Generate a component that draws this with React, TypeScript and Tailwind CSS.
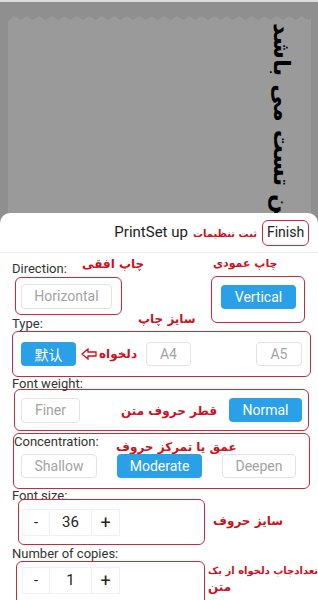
import React from "react";

const ui = "font-['Roboto','Liberation_Sans',sans-serif]";
const note = "font-['DejaVu_Sans',sans-serif] font-bold leading-[14px] text-[#d0101e] whitespace-nowrap";

function RedBox({ className, children }: { className: string; children?: React.ReactNode }) {
  return <div className={"border-[1.5px] border-[#c62a3b] rounded-[6px] " + className}>{children}</div>;
}

function Opt({ label, active, className }: { label: string; active?: boolean; className: string }) {
  return (
    <div
      className={
        "flex items-center justify-center rounded-[4px] text-[14px] " +
        (active ? "bg-[#29a0e8] text-white" : "border border-[#e3e3e3] text-[#a3a3a3] bg-white") +
        " " +
        className
      }
    >
      {label}
    </div>
  );
}

function Stepper({ value }: { value: string }) {
  return (
    <div className="flex h-[27px] text-[15px] text-[#222]">
      <div className="w-[28px] flex items-center justify-center border border-[#f1f1f1]">-</div>
      <div className="w-[41px] flex items-center justify-center border-y border-[#f1f1f1]">{value}</div>
      <div className="w-[29px] flex items-center justify-center border border-[#f1f1f1] text-[18px]">+</div>
    </div>
  );
}

function Note({
  children,
  className = "",
  size = "text-[12px]",
}: {
  children: React.ReactNode;
  className?: string;
  size?: string;
}) {
  return (
    <span dir="rtl" className={note + " " + size + " " + className}>
      {children}
    </span>
  );
}

export default function App() {
  // zigzag edge on top of the print preview paper
  const teeth = Array.from({ length: 25 }, (_, i) => i);
  const zig =
    "0,5 " + teeth.map((i) => `${i * 12.5 + 6.25},0 ${(i + 1) * 12.5},4`).join(" ") + " 303,5";

  return (
    <div className={"w-[318px] h-[600px] overflow-hidden bg-[#8f8f8f] " + ui}>
      {/* Print preview */}
      <div className="relative h-[213px] overflow-hidden border-t-2 border-[#dcdcdc]">
        <div className="pt-[14px] pl-[8px] pr-[7px] h-full">
          <svg width="303" height="5" viewBox="0 0 303 5" preserveAspectRatio="none" className="block">
            <polygon points={zig} fill="#9a9a9a" />
          </svg>
          <div className="bg-[#9a9a9a] h-full" />
        </div>
        <div
          dir="rtl"
          className="absolute left-[296px] top-[21px] origin-top-left rotate-90 whitespace-nowrap font-['DejaVu_Sans',sans-serif] font-bold text-[23px] leading-[28px] text-black"
        >
          متن تست می باشد
        </div>
      </div>

      {/* Settings sheet */}
      <div className="bg-white rounded-t-[10px] h-[387px] text-[#333]">
        <div className="h-[40px] border-b border-[#eeeeee] flex items-center justify-end pr-[9px]">
          <span className="text-[15px] text-[#222]">PrintSet up</span>
          <Note className="ml-[5px] mt-[2px]" size="text-[10px]">
            ثبت تنظیمات
          </Note>
          <RedBox className="ml-[5px] w-[47px] h-[26px] flex items-center justify-center text-[14px] text-[#222]">
            Finish
          </RedBox>
        </div>

        {/* Direction */}
        <div className="h-[24px] flex items-start text-[13px]">
          <span className="ml-[12px] w-[70px] mt-[9px] leading-[14px]">Direction:</span>
          <Note className="w-[131px] mt-[4px] text-left">چاپ افقی</Note>
          <Note className="mt-[4px]" size="text-[11px]">
            چاپ عمودی
          </Note>
        </div>
        <div className="h-[54px] flex items-start">
          <div className="w-[122px] pl-[15px]">
            <RedBox className="w-[107px] h-[38px] pl-[5px] pt-[6px]">
              <Opt label="Horizontal" className="w-[91px] h-[25px]" />
            </RedBox>
            <div className="ml-[-3px] mt-[2px] text-[13px] leading-[14px]">Type:</div>
          </div>
          <Note className="ml-[16px] w-[73px] mt-[35px] text-left">سایز چاپ</Note>
          <RedBox className="w-[94px] h-[47px] -mt-[1px] pl-[9px] pt-[8px]">
            <Opt label="Vertical" active className="w-[75px] h-[24px]" />
          </RedBox>
        </div>

        {/* Type */}
        <RedBox className="ml-[12px] w-[299px] h-[46px] flex items-center px-[8px]">
          <Opt label="默认" active className="w-[55px] h-[24px] font-['Noto_Sans_CJK_SC',sans-serif]" />
          <svg width="16" height="12" viewBox="0 0 16 12" className="ml-[5px]">
            <path d="M1 6 L7 1 L7 4 L15 4 L15 8 L7 8 L7 11 Z" fill="none" stroke="#d0101e" strokeWidth="1.3" />
          </svg>
          <Note className="ml-[2px] w-[45px] text-left">دلخواه</Note>
          <Opt label="A4" className="ml-[2px] w-[45px] h-[24px]" />
          <Opt label="A5" className="ml-auto w-[46px] h-[24px]" />
        </RedBox>

        {/* Font weight */}
        <div className="ml-[12px] h-[12px] text-[13px] leading-[14px]">Font weight:</div>
        <RedBox className="ml-[14px] w-[295px] h-[42px] flex items-center px-[6px]">
          <Opt label="Finer" className="w-[59px] h-[25px]" />
          <Note className="ml-[41px] mt-[2px]">قطر حروف متن</Note>
          <Opt label="Normal" active className="ml-auto w-[73px] h-[24px]" />
        </RedBox>

        {/* Concentration */}
        <RedBox className="ml-[13px] mt-[2px] w-[297px] h-[56px]">
          <div className="h-[20px] flex items-start">
            <span className="ml-0 text-[13px] leading-[14px] w-[102px] mt-[1px]">Concentration:</span>
            <Note className="mt-[6px]">عمق یا تمرکز حروف</Note>
          </div>
          <div className="flex items-center pl-[7px]">
            <Opt label="Shallow" className="w-[76px] h-[24px]" />
            <Opt label="Moderate" active className="ml-[20px] w-[85px] h-[24px]" />
            <Opt label="Deepen" className="ml-[20px] w-[74px] h-[24px]" />
          </div>
        </RedBox>

        {/* Font size */}
        <div className="ml-[12px] h-[10px] text-[13px] leading-[14px]">Font size:</div>
        <div className="flex items-start">
          <RedBox className="ml-[18px] w-[187px] h-[46px] pl-[3px] pt-[9px]">
            <Stepper value="36" />
          </RedBox>
          <Note className="ml-[8px] mt-[15px]">سایز حروف</Note>
        </div>

        {/* Number of copies */}
        <div className="ml-[12px] mt-[2px] h-[14px] text-[13px] leading-[14px]">Number of copies:</div>
        <div className="flex items-start">
          <RedBox className="ml-[16px] w-[189px] h-[46px] pl-[5px] pt-[5px]">
            <Stepper value="1" />
          </RedBox>
          <div className="ml-[3px] mt-[3px] w-[110px] flex flex-col items-start">
            <Note size="text-[10px]">تعدادچاپ دلخواه از یک</Note>
            <Note className="mt-[2px]">متن</Note>
          </div>
        </div>
      </div>
    </div>
  );
}
